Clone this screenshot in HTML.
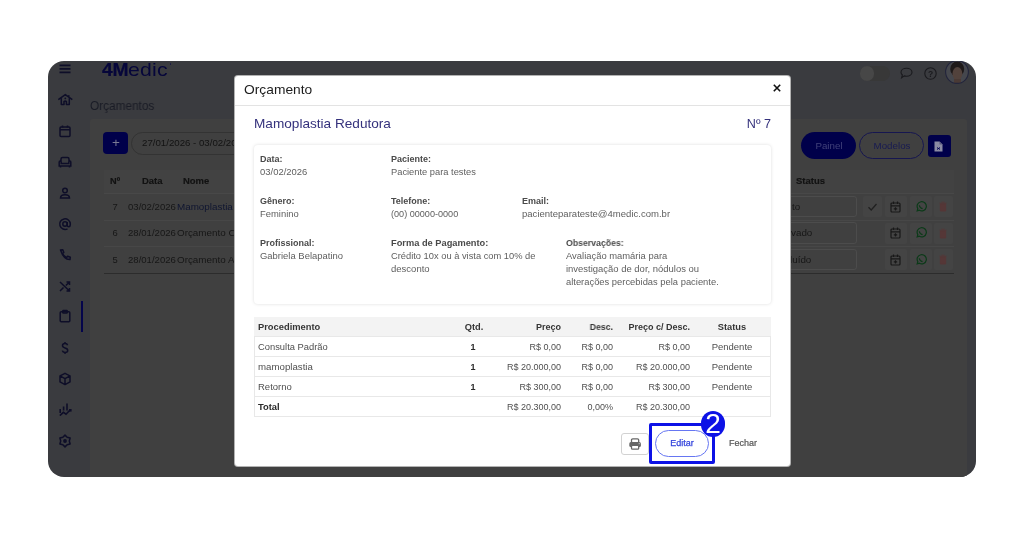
<!DOCTYPE html>
<html><head><meta charset="utf-8"><style>
html,body{margin:0;padding:0;width:1024px;height:538px;overflow:hidden;background:#fff;position:relative;font-family:"Liberation Sans",sans-serif;}
.t{position:absolute;line-height:1;white-space:nowrap;-webkit-font-smoothing:antialiased;will-change:transform;}
.b{position:absolute;}
</style></head><body>
<div id="frame" style="position:absolute;left:48px;top:61px;width:928px;height:415.6px;border-radius:16px;background:#3a3b3f;overflow:hidden">
<div class="b" style="left:42.00px;top:57.50px;width:877.00px;height:400.00px;background:#404040;border-radius:3px;"></div>
<div class="t" style="top:0.62px;font-size:17.7px;color:#06063a;font-weight:700;letter-spacing:-0.3px;left:53.80px;transform:scaleX(1.09);transform-origin:left top;-webkit-text-stroke:0.2px #06063a;">4M</div>
<div class="t" style="top:0.62px;font-size:17.7px;color:#06063a;letter-spacing:0.2px;left:80.40px;transform:scaleX(1.2);transform-origin:left top;">edic</div>
<div class="b" style="left:121.80px;top:2.20px;width:1.60px;height:1.60px;border-radius:50%;background:#1a1a45;"></div>
<div class="t" style="top:38.74px;font-size:12px;color:#1a1c26;left:42.20px;transform:scaleX(0.985);transform-origin:left top;">Orçamentos</div>
<div class="b" style="left:55.00px;top:71.00px;width:25.00px;height:22.00px;background:#00004a;border-radius:4px;"></div>
<div class="t" style="top:74.87px;font-size:13.5px;color:#7a7a94;left:-232.50px;width:600px;text-align:center;">+</div>
<div class="b" style="left:83.00px;top:71.00px;width:150.00px;height:22.50px;border:1px solid #333333;border-radius:12px;box-sizing:border-box;"></div>
<div class="t" style="top:77.73px;font-size:9.3px;color:#121212;left:93.70px;transform:scaleX(1.04);transform-origin:left top;">27/01/2026 - 03/02/2026</div>
<div class="b" style="left:55.50px;top:108.50px;width:850.00px;height:24.00px;background:#424242;border-bottom:1px solid #484848;box-sizing:border-box;"></div>
<div class="t" style="top:115.71px;font-size:9.2px;color:#121212;font-weight:700;left:61.80px;-webkit-text-stroke:0.15px #121212;">Nº</div>
<div class="t" style="top:115.71px;font-size:9.2px;color:#121212;font-weight:700;left:93.70px;transform:scaleX(1.03);transform-origin:left top;-webkit-text-stroke:0.15px #121212;">Data</div>
<div class="t" style="top:115.71px;font-size:9.2px;color:#121212;font-weight:700;left:134.80px;transform:scaleX(1.03);transform-origin:left top;-webkit-text-stroke:0.15px #121212;">Nome</div>
<div class="t" style="top:115.71px;font-size:9.2px;color:#121212;font-weight:700;left:748.00px;transform:scaleX(1.03);transform-origin:left top;-webkit-text-stroke:0.15px #121212;">Status</div>
<div class="t" style="top:141.14px;font-size:9.4px;color:#161616;left:-233.00px;width:600px;text-align:center;">7</div>
<div class="t" style="top:141.14px;font-size:9.4px;color:#161616;left:79.60px;transform:scaleX(1.02);transform-origin:left top;">03/02/2026</div>
<div class="t" style="top:141.14px;font-size:9.4px;color:#0f1530;left:129.30px;transform:scaleX(1.05);transform-origin:left top;">Mamoplastia Redutora</div>
<div class="b" style="left:55.50px;top:158.50px;width:850.00px;height:1.00px;background:#474747;"></div>
<div class="b" style="left:652.00px;top:134.90px;width:157.00px;height:21.50px;border:1px solid #4c4c4c;border-radius:3px;box-sizing:border-box;"></div>
<div class="t" style="top:141.14px;font-size:9.4px;color:#161616;left:743.60px;transform:scaleX(1.05);transform-origin:left top;">to</div>
<div class="b" style="left:815.00px;top:135.20px;width:19.00px;height:21.00px;background:#444;border-radius:2px;"></div>
<svg class="b" style="left:819.00px;top:140.70px;" width="11" height="10" viewBox="0 0 11 10"><path d="M1.5 5.2 L4.2 8 L9.5 2" stroke="#202020" stroke-width="1.3" fill="none"/></svg>
<div class="b" style="left:836.50px;top:135.20px;width:22.00px;height:21.00px;background:#444;border-radius:2px;"></div>
<svg class="b" style="left:842.00px;top:139.70px;" width="11" height="12" viewBox="0 0 11 12"><rect x="1" y="2" width="9" height="9" rx="1" stroke="#181818" stroke-width="1.2" fill="none"/><path d="M1 4.8H10M3.5 0.5V3M7.5 0.5V3M5.5 6.2V9.6M3.8 7.9H7.2" stroke="#181818" stroke-width="1.2" fill="none"/></svg>
<div class="b" style="left:861.50px;top:135.20px;width:22.00px;height:21.00px;background:#444;border-radius:2px;"></div>
<svg class="b" style="left:866.50px;top:139.70px;" width="12" height="12" viewBox="0 0 12 12"><path d="M2.2 9.8 L2.8 7.6 A4.6 4.6 0 1 1 4.4 9.2 Z" stroke="#0b3a18" stroke-width="1.2" fill="none"/><path d="M4.3 4.3 C4.5 6 5.6 7.3 7.6 7.7" stroke="#0b3a18" stroke-width="1.2" fill="none"/></svg>
<div class="b" style="left:885.50px;top:135.20px;width:19.00px;height:21.00px;background:#444;border-radius:2px;"></div>
<svg class="b" style="left:891.00px;top:140.20px;" width="8" height="11" viewBox="0 0 8 11"><path d="M0.5 2.2H7.5M2.5 1.2H5.5M1.3 3V10H6.7V3Z" stroke="#553737" stroke-width="1" fill="#553737"/></svg>
<div class="t" style="top:167.44px;font-size:9.4px;color:#161616;left:-233.00px;width:600px;text-align:center;">6</div>
<div class="t" style="top:167.44px;font-size:9.4px;color:#161616;left:79.60px;transform:scaleX(1.02);transform-origin:left top;">28/01/2026</div>
<div class="t" style="top:167.44px;font-size:9.4px;color:#161616;left:129.30px;transform:scaleX(1.05);transform-origin:left top;">Orçamento Consulta</div>
<div class="b" style="left:55.50px;top:185.00px;width:850.00px;height:1.00px;background:#474747;"></div>
<div class="b" style="left:652.00px;top:161.20px;width:157.00px;height:21.50px;border:1px solid #4c4c4c;border-radius:3px;box-sizing:border-box;"></div>
<div class="t" style="top:167.44px;font-size:9.4px;color:#161616;left:742.60px;transform:scaleX(1.05);transform-origin:left top;">vado</div>
<div class="b" style="left:836.50px;top:161.50px;width:22.00px;height:21.00px;background:#444;border-radius:2px;"></div>
<svg class="b" style="left:842.00px;top:166.00px;" width="11" height="12" viewBox="0 0 11 12"><rect x="1" y="2" width="9" height="9" rx="1" stroke="#181818" stroke-width="1.2" fill="none"/><path d="M1 4.8H10M3.5 0.5V3M7.5 0.5V3M5.5 6.2V9.6M3.8 7.9H7.2" stroke="#181818" stroke-width="1.2" fill="none"/></svg>
<div class="b" style="left:861.50px;top:161.50px;width:22.00px;height:21.00px;background:#444;border-radius:2px;"></div>
<svg class="b" style="left:866.50px;top:166.00px;" width="12" height="12" viewBox="0 0 12 12"><path d="M2.2 9.8 L2.8 7.6 A4.6 4.6 0 1 1 4.4 9.2 Z" stroke="#0b3a18" stroke-width="1.2" fill="none"/><path d="M4.3 4.3 C4.5 6 5.6 7.3 7.6 7.7" stroke="#0b3a18" stroke-width="1.2" fill="none"/></svg>
<div class="b" style="left:885.50px;top:161.50px;width:19.00px;height:21.00px;background:#444;border-radius:2px;"></div>
<svg class="b" style="left:891.00px;top:166.50px;" width="8" height="11" viewBox="0 0 8 11"><path d="M0.5 2.2H7.5M2.5 1.2H5.5M1.3 3V10H6.7V3Z" stroke="#553737" stroke-width="1" fill="#553737"/></svg>
<div class="t" style="top:194.04px;font-size:9.4px;color:#161616;left:-233.00px;width:600px;text-align:center;">5</div>
<div class="t" style="top:194.04px;font-size:9.4px;color:#161616;left:79.60px;transform:scaleX(1.02);transform-origin:left top;">28/01/2026</div>
<div class="t" style="top:194.04px;font-size:9.4px;color:#161616;left:129.30px;transform:scaleX(1.05);transform-origin:left top;">Orçamento Avaliação</div>
<div class="b" style="left:55.50px;top:211.50px;width:850.00px;height:1.30px;background:#2c2c2c;"></div>
<div class="b" style="left:652.00px;top:187.80px;width:157.00px;height:21.50px;border:1px solid #4c4c4c;border-radius:3px;box-sizing:border-box;"></div>
<div class="t" style="top:194.04px;font-size:9.4px;color:#161616;left:742.20px;transform:scaleX(1.05);transform-origin:left top;">luído</div>
<div class="b" style="left:836.50px;top:188.10px;width:22.00px;height:21.00px;background:#444;border-radius:2px;"></div>
<svg class="b" style="left:842.00px;top:192.60px;" width="11" height="12" viewBox="0 0 11 12"><rect x="1" y="2" width="9" height="9" rx="1" stroke="#181818" stroke-width="1.2" fill="none"/><path d="M1 4.8H10M3.5 0.5V3M7.5 0.5V3M5.5 6.2V9.6M3.8 7.9H7.2" stroke="#181818" stroke-width="1.2" fill="none"/></svg>
<div class="b" style="left:861.50px;top:188.10px;width:22.00px;height:21.00px;background:#444;border-radius:2px;"></div>
<svg class="b" style="left:866.50px;top:192.60px;" width="12" height="12" viewBox="0 0 12 12"><path d="M2.2 9.8 L2.8 7.6 A4.6 4.6 0 1 1 4.4 9.2 Z" stroke="#0b3a18" stroke-width="1.2" fill="none"/><path d="M4.3 4.3 C4.5 6 5.6 7.3 7.6 7.7" stroke="#0b3a18" stroke-width="1.2" fill="none"/></svg>
<div class="b" style="left:885.50px;top:188.10px;width:19.00px;height:21.00px;background:#444;border-radius:2px;"></div>
<svg class="b" style="left:891.00px;top:193.10px;" width="8" height="11" viewBox="0 0 8 11"><path d="M0.5 2.2H7.5M2.5 1.2H5.5M1.3 3V10H6.7V3Z" stroke="#553737" stroke-width="1" fill="#553737"/></svg>
<div class="b" style="left:753.30px;top:71.30px;width:54.30px;height:27.00px;background:#00004a;border-radius:13.5px;"></div>
<div class="t" style="top:80.34px;font-size:9.4px;color:#40407a;left:480.50px;width:600px;text-align:center;transform:scaleX(1.04);transform-origin:center top;">Painel</div>
<div class="b" style="left:810.80px;top:71.20px;width:65.60px;height:27.00px;border:1.3px solid #161650;border-radius:13.5px;box-sizing:border-box;"></div>
<div class="t" style="top:80.34px;font-size:9.4px;color:#181b52;left:543.60px;width:600px;text-align:center;transform:scaleX(1.04);transform-origin:center top;">Modelos</div>
<div class="b" style="left:879.50px;top:74.30px;width:23.00px;height:22.10px;background:#00004a;border-radius:3px;"></div>
<svg class="b" style="left:886.00px;top:80.00px;" width="9" height="11" viewBox="0 0 9 11"><path d="M0.5 0.5H5.5L8.5 3.5V10.5H0.5Z" fill="#8b8ba3"/><path d="M5.5 0.5V3.5H8.5" fill="#5a5a80"/><path d="M3 6.5L6 8.5M6 6.5L3 8.5" stroke="#00004f" stroke-width="0.9"/></svg>
<div class="b" style="left:811.50px;top:5.00px;width:30.50px;height:14.50px;background:#383838;border-radius:8px;"></div>
<div class="b" style="left:811.50px;top:5.00px;width:14.50px;height:14.50px;background:#474747;border-radius:50%;"></div>
<svg class="b" style="left:852.00px;top:6.00px;" width="13" height="12" viewBox="0 0 13 12"><path d="M6.5 1.2 C9.6 1.2 12 3 12 5.2 C12 7.4 9.6 9.2 6.5 9.2 C5.7 9.2 5 9.1 4.3 8.9 L1.6 10.8 L2.4 8 C1.5 7.2 1 6.3 1 5.2 C1 3 3.4 1.2 6.5 1.2Z" stroke="#1a1a1e" stroke-width="1.1" fill="none"/></svg>
<svg class="b" style="left:875.50px;top:5.50px;" width="13" height="13" viewBox="0 0 13 13"><circle cx="6.5" cy="6.5" r="5.7" stroke="#1a1a1e" stroke-width="1.1" fill="none"/><text x="6.5" y="9.6" font-size="8.5" text-anchor="middle" fill="#1a1a1e" font-family="Liberation Sans" font-weight="700">?</text></svg>
<svg class="b" style="left:897.00px;top:-0.80px;" width="24" height="24" viewBox="0 0 24 24"><defs><clipPath id="av"><circle cx="12" cy="12" r="11.2"/></clipPath></defs><g clip-path="url(#av)"><rect width="24" height="24" fill="#45474d"/><ellipse cx="12.2" cy="9" rx="7" ry="7.5" fill="#1e1919"/><ellipse cx="12.4" cy="13.6" rx="4.9" ry="6.6" fill="#52423c"/><rect x="9" y="19" width="7" height="6" fill="#4a3a35"/></g><circle cx="12" cy="12" r="11.4" stroke="#23253c" stroke-width="1.1" fill="none"/></svg>
<svg class="b" style="left:10.00px;top:1.00px;" width="14" height="14" viewBox="0 0 14 14"><path d="M1.5 3.3H12.5M1.5 6.8H12.5M1.5 10.3H12.5" stroke="#0e0e28" stroke-width="1.7"/></svg>
<svg class="b" style="left:9.00px;top:32.00px;" width="16" height="14" viewBox="0 0 16 14"><path d="M1.3 6.6 L8.3 1.6 L15.3 6.6 M11.8 2.2 V4.6 M4.3 5.2 V11.4 H7 V8.6 Q8.2 7.4 9.4 8.6 V11.4 H12.3 V5.2" stroke="#0e0e28" stroke-width="1.5" fill="none" stroke-linejoin="round"/><circle cx="8.3" cy="5.4" r="0.9" fill="#0e0e28"/></svg>
<svg class="b" style="left:10.00px;top:62.60px;" width="14" height="14" viewBox="0 0 14 14"><rect x="2" y="3" width="10" height="9.5" rx="1" stroke="#0e0e28" stroke-width="1.5" fill="none"/><path d="M2 5.8H12M4.5 1.5V3.5M9.5 1.5V3.5" stroke="#0e0e28" stroke-width="1.5"/></svg>
<svg class="b" style="left:10.00px;top:94.00px;" width="14" height="14" viewBox="0 0 14 14"><path d="M3 6.5 V4 Q3 2.5 4.5 2.5 H9.5 Q11 2.5 11 4 V6.5 M1.2 7 Q1.2 6 2.2 6 Q3.2 6 3.2 7 V8.5 H10.8 V7 Q10.8 6 11.8 6 Q12.8 6 12.8 7 V11 H1.2 Z M2.5 11V12.5M11.5 11V12.5" stroke="#0e0e28" stroke-width="1.5" fill="none"/></svg>
<svg class="b" style="left:10.00px;top:125.00px;" width="14" height="14" viewBox="0 0 14 14"><circle cx="7" cy="4.5" r="2.3" stroke="#0e0e28" stroke-width="1.5" fill="none"/><path d="M2.5 12 Q2.5 8.8 7 8.8 Q11.5 8.8 11.5 12 Z" stroke="#0e0e28" stroke-width="1.5" fill="none"/></svg>
<svg class="b" style="left:10.00px;top:155.60px;" width="14" height="14" viewBox="0 0 14 14"><circle cx="7" cy="7" r="2.2" stroke="#0e0e28" stroke-width="1.5" fill="none"/><path d="M9.2 5 V8 Q9.2 9.8 10.8 9.8 Q12.3 9.8 12.3 7 A5.3 5.3 0 1 0 9.5 11.8" stroke="#0e0e28" stroke-width="1.5" fill="none"/></svg>
<svg class="b" style="left:10.00px;top:187.00px;" width="14" height="14" viewBox="0 0 14 14"><path d="M2.5 2 L4.8 1.8 L5.8 4.5 L4.5 5.5 Q5.8 8.3 8.6 9.6 L9.6 8.2 L12.3 9.2 L12 11.6 Q6 12 2.5 2Z" stroke="#0e0e28" stroke-width="1.5" fill="none" stroke-linejoin="round"/></svg>
<svg class="b" style="left:10.00px;top:217.50px;" width="14" height="14" viewBox="0 0 14 14"><path d="M2 3 L11.5 12 M8.5 3 H11.5 V6 M11.5 3 L7.8 6.5 M8.5 12 H11.5 V9 M2 12 L5.5 8.5" stroke="#0e0e28" stroke-width="1.5" fill="none"/></svg>
<svg class="b" style="left:10.00px;top:248.00px;" width="14" height="14" viewBox="0 0 14 14"><rect x="2.2" y="2.8" width="9.6" height="10" rx="1" stroke="#0e0e28" stroke-width="1.5" fill="none"/><rect x="4.8" y="1.5" width="4.4" height="2.6" rx="0.5" stroke="#0e0e28" stroke-width="1.5" fill="none"/></svg>
<div class="b" style="left:33.20px;top:240.00px;width:2.10px;height:31.00px;background:#04044c;"></div>
<svg class="b" style="left:10.00px;top:280.40px;" width="14" height="14" viewBox="0 0 14 14"><path d="M9.6 4.2 Q9.2 2.6 7 2.6 Q4.5 2.6 4.5 4.6 Q4.5 6.4 7 6.9 Q9.7 7.4 9.7 9.4 Q9.7 11.4 7 11.4 Q4.7 11.4 4.3 9.7 M7 0.9 V2.6 M7 11.4 V13" stroke="#0e0e28" stroke-width="1.5" fill="none"/></svg>
<svg class="b" style="left:10.00px;top:310.50px;" width="14" height="14" viewBox="0 0 14 14"><path d="M7 1.3 L12 3.9 V9.9 L7 12.6 L2 9.9 V3.9Z M2 3.9 L7 6.6 L12 3.9 M7 6.6 V12.6" stroke="#0e0e28" stroke-width="1.5" fill="none" stroke-linejoin="round"/></svg>
<svg class="b" style="left:10.00px;top:341.00px;" width="14" height="14" viewBox="0 0 14 14"><path d="M2.2 7V11 M5.6 4.5V8.5 M9 1.5V8.5 M1.8 13.6 L5.4 10.3 L8 12.2 L11.8 8.2" stroke="#0e0e28" stroke-width="1.6" fill="none"/><rect x="11" y="7" width="2.6" height="2.6" fill="#0e0e28"/></svg>
<svg class="b" style="left:10.00px;top:373.00px;" width="14" height="14" viewBox="0 0 14 14"><path d="M7.00 1.10 L9.15 3.28 L12.11 4.05 L11.30 7.00 L12.11 9.95 L9.15 10.72 L7.00 12.90 L4.85 10.72 L1.89 9.95 L2.70 7.00 L1.89 4.05 L4.85 3.28Z" stroke="#0e0e28" stroke-width="1.5" fill="none" stroke-linejoin="round"/><circle cx="7" cy="7" r="1.9" fill="#0e0e28"/></svg>
</div>
<div id="modal" style="position:absolute;left:234px;top:75px;width:556.7px;height:391.7px;background:#fff;border-radius:4px;overflow:hidden;border:1px solid rgba(0,0,0,0.3);box-sizing:border-box">
<div class="t" style="top:6.86px;font-size:13.4px;color:#1d1d1d;left:9.00px;transform:scaleX(1.03);transform-origin:left top;">Orçamento</div>
<svg class="b" style="left:537.60px;top:8.10px;" width="8" height="8" viewBox="0 0 8 8"><path d="M0.8 0.8 L7.2 7.2 M7.2 0.8 L0.8 7.2" stroke="#111" stroke-width="1.6"/></svg>
<div class="b" style="left:0.00px;top:28.50px;width:554.70px;height:1.00px;background:#e3e3e3;"></div>
<div class="t" style="top:40.70px;font-size:13px;color:#34317c;left:19.40px;transform:scaleX(1.047);transform-origin:left top;">Mamoplastia Redutora</div>
<div class="t" style="top:41.63px;font-size:12.6px;color:#34317c;left:-64.20px;width:600px;text-align:right;">Nº 7</div>
<div class="b" style="left:18.50px;top:69.00px;width:517.00px;height:158.60px;border-radius:4px;box-shadow:0 0 3.5px rgba(0,0,0,0.14);"></div>
<div class="t" style="top:78.68px;font-size:9px;color:#4a4a4a;font-weight:700;left:25.30px;">Data:</div>
<div class="t" style="top:91.58px;font-size:9px;color:#5e5e5e;left:25.30px;transform:scaleX(1.05);transform-origin:left top;">03/02/2026</div>
<div class="t" style="top:78.68px;font-size:9px;color:#4a4a4a;font-weight:700;left:156.20px;">Paciente:</div>
<div class="t" style="top:91.58px;font-size:9px;color:#5e5e5e;left:156.20px;transform:scaleX(1.035);transform-origin:left top;">Paciente para testes</div>
<div class="t" style="top:120.98px;font-size:9px;color:#4a4a4a;font-weight:700;left:25.10px;">Gênero:</div>
<div class="t" style="top:133.88px;font-size:9px;color:#5e5e5e;left:25.10px;transform:scaleX(1.045);transform-origin:left top;">Feminino</div>
<div class="t" style="top:120.98px;font-size:9px;color:#4a4a4a;font-weight:700;left:156.20px;">Telefone:</div>
<div class="t" style="top:133.88px;font-size:9px;color:#5e5e5e;left:156.20px;transform:scaleX(1.01);transform-origin:left top;">(00) 00000-0000</div>
<div class="t" style="top:120.98px;font-size:9px;color:#4a4a4a;font-weight:700;left:287.10px;">Email:</div>
<div class="t" style="top:133.88px;font-size:9px;color:#5e5e5e;left:287.10px;transform:scaleX(1.06);transform-origin:left top;">pacienteparateste@4medic.com.br</div>
<div class="t" style="top:162.98px;font-size:9px;color:#4a4a4a;font-weight:700;left:25.10px;">Profissional:</div>
<div class="t" style="top:175.88px;font-size:9px;color:#5e5e5e;left:25.10px;transform:scaleX(1.05);transform-origin:left top;">Gabriela Belapatino</div>
<div class="t" style="top:162.98px;font-size:9px;color:#4a4a4a;font-weight:700;left:156.20px;transform:scaleX(1.03);transform-origin:left top;">Forma de Pagamento:</div>
<div class="t" style="top:175.88px;font-size:9px;color:#5e5e5e;left:156.20px;transform:scaleX(1.035);transform-origin:left top;">Crédito 10x ou à vista com 10% de</div>
<div class="t" style="top:188.78px;font-size:9px;color:#5e5e5e;left:156.20px;transform:scaleX(1.057);transform-origin:left top;">desconto</div>
<div class="t" style="top:162.98px;font-size:9px;color:#4a4a4a;font-weight:700;left:331.00px;transform:scaleX(0.97);transform-origin:left top;">Observações:</div>
<div class="t" style="top:175.88px;font-size:9px;color:#5e5e5e;left:331.00px;transform:scaleX(1.045);transform-origin:left top;">Avaliação mamária para</div>
<div class="t" style="top:188.78px;font-size:9px;color:#5e5e5e;left:331.00px;transform:scaleX(1.051);transform-origin:left top;">investigação de dor, nódulos ou</div>
<div class="t" style="top:201.68px;font-size:9px;color:#5e5e5e;left:331.00px;transform:scaleX(1.042);transform-origin:left top;">alterações percebidas pela paciente.</div>
<div class="b" style="left:19.00px;top:241.00px;width:517.00px;height:19.50px;background:#f3f3f3;"></div>
<div class="t" style="top:246.58px;font-size:9px;color:#353535;font-weight:700;left:22.80px;transform:scaleX(1.037);transform-origin:left top;">Procedimento</div>
<div class="t" style="top:246.58px;font-size:9px;color:#353535;font-weight:700;left:-61.20px;width:600px;text-align:center;transform:scaleX(1.03);transform-origin:center top;">Qtd.</div>
<div class="t" style="top:246.58px;font-size:9px;color:#353535;font-weight:700;left:-274.50px;width:600px;text-align:right;">Preço</div>
<div class="t" style="top:246.58px;font-size:9px;color:#353535;font-weight:700;left:-222.50px;width:600px;text-align:right;transform:scaleX(0.97);transform-origin:right top;">Desc.</div>
<div class="t" style="top:246.58px;font-size:9px;color:#353535;font-weight:700;left:-144.80px;width:600px;text-align:right;">Preço c/ Desc.</div>
<div class="t" style="top:246.58px;font-size:9px;color:#353535;font-weight:700;left:196.80px;width:600px;text-align:center;transform:scaleX(1.03);transform-origin:center top;">Status</div>
<div class="b" style="left:18.50px;top:260.00px;width:517.50px;height:81.00px;border:1px solid #e8e8e8;border-top:none;box-sizing:border-box;"></div>
<div class="b" style="left:18.50px;top:260.00px;width:517.50px;height:1.00px;background:#e8e8e8;"></div>
<div class="b" style="left:18.50px;top:280.00px;width:517.50px;height:1.00px;background:#e8e8e8;"></div>
<div class="b" style="left:18.50px;top:300.00px;width:517.50px;height:1.00px;background:#e8e8e8;"></div>
<div class="b" style="left:18.50px;top:320.00px;width:517.50px;height:1.00px;background:#e8e8e8;"></div>
<div class="t" style="top:266.68px;font-size:9px;color:#4f4f4f;left:22.80px;transform:scaleX(1.04);transform-origin:left top;">Consulta Padrão</div>
<div class="t" style="top:266.68px;font-size:9px;color:#2a2a2a;font-weight:700;left:-61.60px;width:600px;text-align:center;">1</div>
<div class="t" style="top:266.68px;font-size:9px;color:#4f4f4f;left:-274.50px;width:600px;text-align:right;">R$ 0,00</div>
<div class="t" style="top:266.68px;font-size:9px;color:#4f4f4f;left:-222.50px;width:600px;text-align:right;">R$ 0,00</div>
<div class="t" style="top:266.68px;font-size:9px;color:#4f4f4f;left:-144.80px;width:600px;text-align:right;">R$ 0,00</div>
<div class="t" style="top:266.68px;font-size:9px;color:#4f4f4f;left:196.80px;width:600px;text-align:center;transform:scaleX(1.055);transform-origin:center top;">Pendente</div>
<div class="t" style="top:287.18px;font-size:9px;color:#4f4f4f;left:22.80px;transform:scaleX(1.075);transform-origin:left top;">mamoplastia</div>
<div class="t" style="top:287.18px;font-size:9px;color:#2a2a2a;font-weight:700;left:-61.60px;width:600px;text-align:center;">1</div>
<div class="t" style="top:287.18px;font-size:9px;color:#4f4f4f;left:-274.50px;width:600px;text-align:right;">R$ 20.000,00</div>
<div class="t" style="top:287.18px;font-size:9px;color:#4f4f4f;left:-222.50px;width:600px;text-align:right;">R$ 0,00</div>
<div class="t" style="top:287.18px;font-size:9px;color:#4f4f4f;left:-144.80px;width:600px;text-align:right;">R$ 20.000,00</div>
<div class="t" style="top:287.18px;font-size:9px;color:#4f4f4f;left:196.80px;width:600px;text-align:center;transform:scaleX(1.055);transform-origin:center top;">Pendente</div>
<div class="t" style="top:307.28px;font-size:9px;color:#4f4f4f;left:22.80px;transform:scaleX(1.056);transform-origin:left top;">Retorno</div>
<div class="t" style="top:307.28px;font-size:9px;color:#2a2a2a;font-weight:700;left:-61.60px;width:600px;text-align:center;">1</div>
<div class="t" style="top:307.28px;font-size:9px;color:#4f4f4f;left:-274.50px;width:600px;text-align:right;">R$ 300,00</div>
<div class="t" style="top:307.28px;font-size:9px;color:#4f4f4f;left:-222.50px;width:600px;text-align:right;">R$ 0,00</div>
<div class="t" style="top:307.28px;font-size:9px;color:#4f4f4f;left:-144.80px;width:600px;text-align:right;">R$ 300,00</div>
<div class="t" style="top:307.28px;font-size:9px;color:#4f4f4f;left:196.80px;width:600px;text-align:center;transform:scaleX(1.055);transform-origin:center top;">Pendente</div>
<div class="t" style="top:326.98px;font-size:9px;color:#2a2a2a;font-weight:700;left:22.60px;transform:scaleX(1.04);transform-origin:left top;">Total</div>
<div class="t" style="top:326.98px;font-size:9px;color:#4f4f4f;left:-274.50px;width:600px;text-align:right;">R$ 20.300,00</div>
<div class="t" style="top:326.98px;font-size:9px;color:#4f4f4f;left:-222.50px;width:600px;text-align:right;">0,00%</div>
<div class="t" style="top:326.98px;font-size:9px;color:#4f4f4f;left:-144.80px;width:600px;text-align:right;">R$ 20.300,00</div>
<div class="b" style="left:386.30px;top:357.00px;width:27.40px;height:22.40px;border:1px solid #d2d2d2;border-radius:3px;box-sizing:border-box;"></div>
<svg class="b" style="left:394.30px;top:361.50px;" width="12.2" height="12" viewBox="0 0 12.2 12"><rect x="2.5" y="0.8" width="7.2" height="4" rx="1.2" stroke="#666" stroke-width="1.3" fill="none"/><rect x="0.3" y="4.1" width="11.6" height="5" rx="1.6" fill="#666"/><rect x="2.5" y="7.3" width="7.2" height="3.9" rx="0.9" stroke="#666" stroke-width="1.3" fill="#fff"/><circle cx="10.2" cy="5.7" r="0.6" fill="#ccc"/></svg>
<div class="b" style="left:420.20px;top:353.50px;width:53.80px;height:27.50px;border:1.4px solid #6676f2;border-radius:14px;box-sizing:border-box;"></div>
<div class="t" style="top:363.48px;font-size:9px;color:#3444dc;left:147.20px;width:600px;text-align:center;-webkit-text-stroke:0.25px #3444dc;">Editar</div>
<div class="t" style="top:363.48px;font-size:9px;color:#555555;left:208.30px;width:600px;text-align:center;-webkit-text-stroke:0.2px #555;">Fechar</div>
</div>
<div class="b" style="left:649.30px;top:422.60px;width:65.70px;height:41.80px;border:3.3px solid #0d12e6;border-radius:2px;box-sizing:border-box;"></div>
<div class="b" style="left:700.60px;top:411.40px;width:24.80px;height:25.20px;background:#0d12e6;border-radius:50%;"></div>
<div class="t" style="top:409.90px;font-size:28px;color:#ffffff;left:413.10px;width:600px;text-align:center;">2</div>
</body></html>
